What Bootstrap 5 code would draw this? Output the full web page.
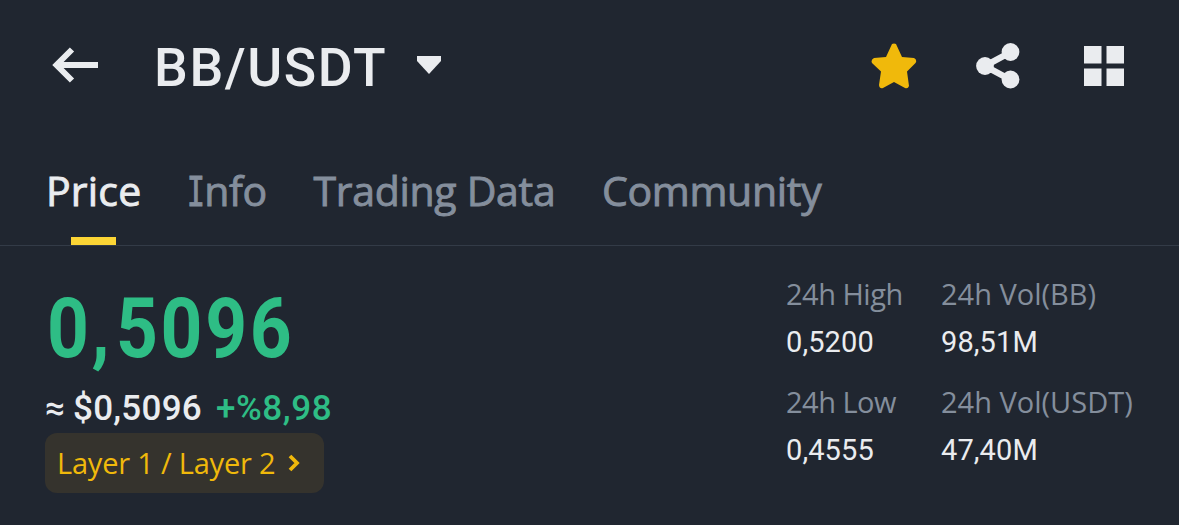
<!DOCTYPE html>
<html lang="en">
<head>
<meta charset="utf-8">
<meta name="viewport" content="width=device-width, initial-scale=1">
<title>BB/USDT</title>
<link href="https://cdn.jsdelivr.net/npm/bootstrap@5.3.0/dist/css/bootstrap.min.css" rel="stylesheet">
<style>
body{background:#202630;color:#eaecef;font-family:Roboto,sans-serif;height:525px;overflow:hidden}
svg{display:block;flex:none}
.topbar{height:134px;padding:0 55px 0 52px}
.arrow,.caret{margin-bottom:4px}
.icons{margin-bottom:2px}
.share{margin-left:59px}
.tiles{margin-left:64px}
.pair{font-size:53.5px;line-height:60px;font-weight:500;letter-spacing:1.6px;margin:2px 0 0 56px}
.caret{margin-left:30px}
.tabs{height:112px;padding:26px 0 0 46px;border-bottom:1px solid #333b47;gap:46.5px;font-family:"Open Sans",sans-serif;font-size:41px;line-height:60px;letter-spacing:-.3px;-webkit-text-stroke:.9px}
.tabs .nav-link{padding:0;color:#848e9c;position:relative;white-space:nowrap;height:85px}
.tabs .nav-link.active{color:#eaecef;letter-spacing:.2px}
.tabs .active::after{content:"";position:absolute;left:25px;width:45px;height:8px;bottom:0;background:#fcd535}
.slab{display:inline-block;font-family:"DejaVu Sans Mono",monospace;font-size:40px;line-height:1;transform:scaleX(.76);margin:0 -4px 0 -3.5px}
.quote{padding:43px 0 0 45px}
.price{font-size:84px;font-weight:700;line-height:80px;color:#2ebd85}
.digits{display:inline-block;transform:scaleX(.87);transform-origin:0 50%;letter-spacing:3px;margin-left:2px}
.comma{letter-spacing:7.5px}
.sub{font-size:35px;font-weight:500;line-height:40px;margin-top:20px}
.usd{margin-left:8px;letter-spacing:.25px}
.up{color:#2ebd85;margin-left:14px;letter-spacing:.6px}
.tagline{width:279px;height:60px;margin-top:4px;border-radius:12px;background:#35332d;color:#f0b90b;font-family:"Open Sans",sans-serif;font-size:29px;letter-spacing:-.2px;padding-left:12px}
.tagline svg{margin-left:12px}
.stats{padding:30px 46px 0 0;display:grid;grid-template-columns:155px 192px;font-size:29px;line-height:36px;white-space:nowrap}
.stats dt{font-family:"Open Sans",sans-serif;font-weight:400;color:#848e9c;height:48px;line-height:35px}
.stats .first{letter-spacing:-.5px}
.stats dd{margin:0;height:60px;letter-spacing:.1px}
</style>
</head>
<body>
<header class="topbar d-flex align-items-center">
  <svg class="arrow" width="46" height="38" viewBox="0 0 46 38" fill="none" stroke="#eaecef" stroke-width="6"><path d="M20 3.500 4.500 19 20 34.500M4 19H46"/></svg>
  <h1 class="pair">BB/USDT</h1>
  <svg class="caret" width="24" height="18" viewBox="0 0 24 18" fill="#eaecef"><path d="M0 0H24V5L12 18 0 5Z"/></svg>
  <div class="ms-auto d-flex align-items-center icons">
    <svg width="46" height="46" viewBox="0 0 46 46" fill="#f0b90b"><path d="M21 1Q23 0 25 1L31 14 43 15Q46.500 17 44.500 20L36 28.500 38 43Q37 46 34 45L23 39 12 45Q8.500 46 8 42L10 28.500 1 20Q-.5 17 3 15L15 14Z"/></svg>
    <svg class="share" width="44" height="46" viewBox="0 0 44 46" fill="#eaecef"><path d="M34 9.500 9 23 34 36.500" fill="none" stroke="#eaecef" stroke-width="6.500"/><circle cx="34.500" cy="9" r="8.900"/><circle cx="9" cy="23" r="8.900"/><circle cx="34.500" cy="36.500" r="8.900"/></svg>
    <svg class="tiles" width="40" height="40" viewBox="0 0 40 40" fill="#eaecef"><path d="M0 0H17.500V17.500H0ZM22.500 0H40V17.500H22.500ZM0 22.500H17.500V40H0ZM22.500 22.500H40V40H22.500Z"/></svg>
  </div>
</header>
<nav class="tabs nav flex-nowrap">
  <a class="nav-link active" href="#">Price</a>
  <a class="nav-link" href="#"><span class="slab">I</span>nfo</a>
  <a class="nav-link" href="#">Trading Data</a>
  <a class="nav-link" href="#">Community</a>
</nav>
<main class="d-flex justify-content-between align-items-start">
  <section class="quote">
    <div class="price"><span class="digits">0<span class="comma">,</span>5096</span></div>
    <div class="sub d-flex"><span>≈</span><span class="usd">$0,5096</span><span class="up">+%8,98</span></div>
    <a class="tagline d-flex align-items-center text-decoration-none" href="#"><span>Layer 1 / Layer 2</span>
      <svg width="14" height="18" viewBox="0 0 14 18" fill="none" stroke="#f0b90b" stroke-width="3.800"><path d="M3 2 10 9 3 16"/></svg></a>
  </section>
  <dl class="stats mb-0">
    <dt class="first">24h High</dt><dt>24h Vol(BB)</dt>
    <dd>0,5200</dd><dd>98,51M</dd>
    <dt class="first">24h Low</dt><dt>24h Vol(USDT)</dt>
    <dd>0,4555</dd><dd>47,40M</dd>
  </dl>
</main>
<script src="https://cdn.jsdelivr.net/npm/bootstrap@5.3.0/dist/js/bootstrap.bundle.min.js"></script>
</body>
</html>
